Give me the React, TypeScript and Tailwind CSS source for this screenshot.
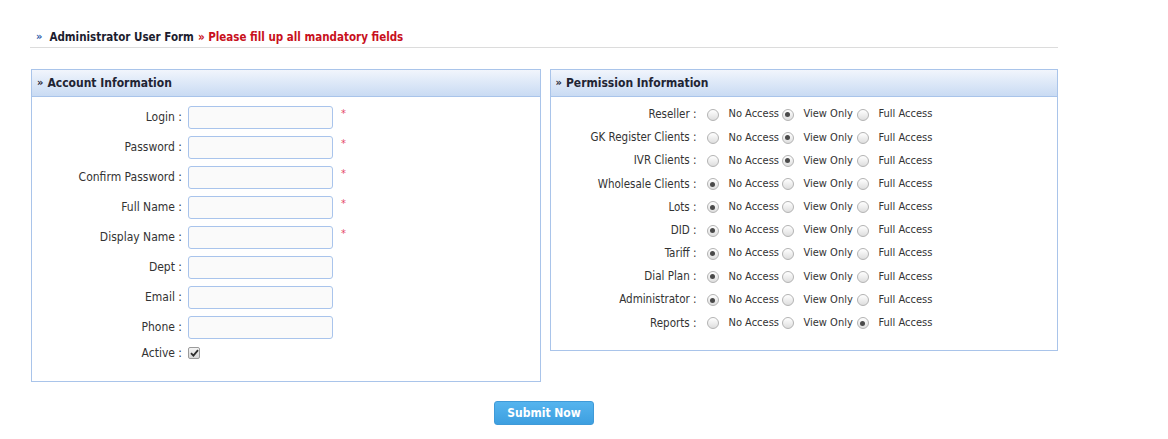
import React from "react"

const font = "font-['DejaVu_Sans_Condensed','DejaVu_Sans',sans-serif]"

const accountFields = [
  { label: "Login", required: true },
  { label: "Password", required: true },
  { label: "Confirm Password", required: true },
  { label: "Full Name", required: true },
  { label: "Display Name", required: true },
  { label: "Dept", required: false },
  { label: "Email", required: false },
  { label: "Phone", required: false },
]

// 0 = no access, 1 = view only, 2 = full access
const permissions: [string, number][] = [
  ["Reseller", 1],
  ["GK Register Clients", 1],
  ["IVR Clients", 1],
  ["Wholesale Clients", 0],
  ["Lots", 0],
  ["DID", 0],
  ["Tariff", 0],
  ["Dial Plan", 0],
  ["Administrator", 0],
  ["Reports", 2],
]

const levels = ["No Access", "View Only", "Full Access"]

function Radio({ checked }: { checked: boolean }) {
  return (
    <span className="flex h-3 w-3 shrink-0 items-center justify-center rounded-full border border-[#b3b3b3] bg-gradient-to-b from-[#ffffff] to-[#dedede]">
      {checked && <span className="h-[5px] w-[5px] rounded-full bg-[#4a4a4a]" />}
    </span>
  )
}

function PanelHeader({ title }: { title: string }) {
  return (
    <div className="flex h-[27px] items-center border-b border-[#a9c4ea] bg-gradient-to-b from-[#f1f5fc] to-[#c9dbf3] pl-[5px] text-[12px] font-bold text-[#1f2433]">
      <span className="mr-[4px] text-[11px] text-[#1f2433]">»</span>
      {title}
    </div>
  )
}

export default function App() {
  return (
    <div className={`min-h-[439px] w-[1168px] bg-white ${font} text-[#333]`}>
      <div className="w-[1058px] pl-[30px] pt-[28px]">
        {/* Title */}
        <div className="flex h-[20px] items-center border-b border-[#dcdcdc] pl-[6px] text-[11.5px] font-bold">
          <span className="mr-[7px] text-[11px] text-[#2b5aa8]">»</span>
          <span className="text-[#1c1c2e]">Administrator User Form</span>
          <span className="ml-[4px] text-[#c8101c]">» Please fill up all mandatory fields</span>
        </div>

        <div className="ml-[1px] mt-[21px] flex items-start gap-[9px]">
          {/* Account panel */}
          <div className="w-[510px] border border-[#a9c4ea]">
            <PanelHeader title="Account Information" />
            <div className="pb-[17px] pt-[5px]">
              {accountFields.map((f) => (
                <div key={f.label} className="flex h-[30px] items-center">
                  <span className="w-[150px] text-right text-[12px]">{f.label} :</span>
                  <input
                    type="text"
                    className="ml-[6px] h-[23px] w-[145px] rounded-[3px] border border-[#a9c4ec] bg-[#fafafa] outline-none"
                  />
                  {f.required && (
                    <span className="mb-[6px] ml-[8px] text-[11px] text-[#e5466a]">*</span>
                  )}
                </div>
              ))}
              <div className="flex h-[22px] items-center">
                <span className="w-[150px] text-right text-[12px]">Active :</span>
                <span className="ml-[6px] flex h-[12px] w-[12px] items-center justify-center rounded-[2px] border border-[#9a9a9a] bg-gradient-to-b from-[#f4f4f4] to-[#d8d8d8]">
                  <svg width="9" height="8" viewBox="0 0 9 8">
                    <path d="M1 4.2 L3.4 6.6 L8 1.2" fill="none" stroke="#2e2e2e" strokeWidth="1.8" />
                  </svg>
                </span>
              </div>
            </div>
          </div>

          {/* Permission panel */}
          <div className="w-[509px] border border-[#a9c4ea]">
            <PanelHeader title="Permission Information" />
            <div className="pb-[15px] pt-[6px]">
              {permissions.map(([name, level]) => (
                <div key={name} className="flex h-[23.2px] items-center">
                  <span className="w-[146px] text-right text-[11.5px]">{name} :</span>
                  <div className="ml-[10px] flex">
                    {levels.map((l, i) => (
                      <div key={l} className="flex w-[75px] items-center whitespace-nowrap">
                        <Radio checked={i === level} />
                        <span className="ml-[10px] text-[11px]">{l}</span>
                      </div>
                    ))}
                  </div>
                </div>
              ))}
            </div>
          </div>
        </div>

        <div className="mt-[19px] flex justify-center">
          <button className="h-[24px] w-[100px] rounded-[3px] border border-[#3f9ad8] bg-gradient-to-b from-[#55b4ee] to-[#3d9fe0] text-[12px] font-bold text-white">
            Submit Now
          </button>
        </div>
      </div>
    </div>
  )
}
